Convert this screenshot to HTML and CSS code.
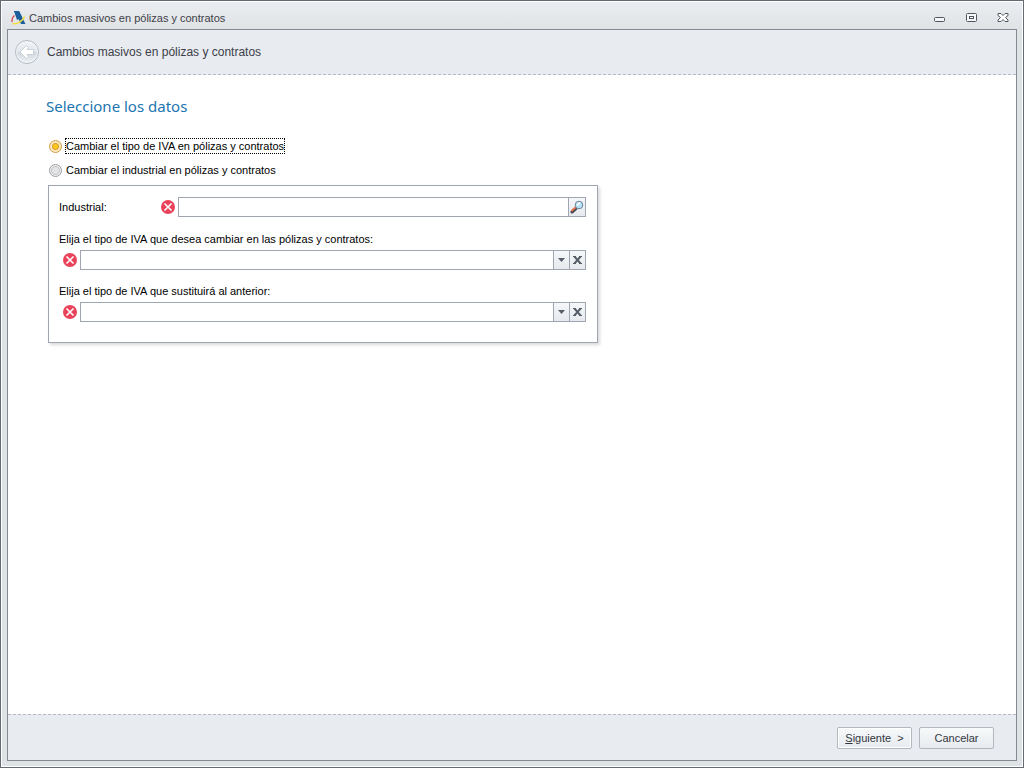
FILE: index.html
```html
<!DOCTYPE html>
<html lang="es">
<head>
    <meta charset="utf-8">
    <title>Cambios masivos en pólizas y contratos</title>
    <link rel="stylesheet" href="styles.css">
</head>
<body>
    <div class="window">
        <div class="titlebar">
            <svg class="logo" width="15" height="14" viewBox="0 0 15 14">
                <path d="M3 0h5l6.500 13H10L6 5z" fill="#1c5f9c"/>
                <path d="M3 0h5l3 6-5 3z" fill="#1c5f9c"/>
                <path d="M3.500 4.500C1.500 6 .8 8 1 11" fill="none" stroke="#cf4650" stroke-width="1.300"/>
                <path d="M1.500 12.500C6 13.500 12 10 13.500 5.500" fill="none" stroke="#f2e03c" stroke-width="1.500"/>
            </svg>
            <span class="caption">Cambios masivos en pólizas y contratos</span>
            <div class="window-buttons">
                <button type="button" aria-label="Minimizar">
                    <svg width="12" height="12" viewBox="0 0 12 12"><rect x="1.500" y="5.500" width="10" height="4" rx="1" fill="#f6f7f8" stroke="#50565e"/></svg>
                </button>
                <button type="button" aria-label="Maximizar">
                    <svg width="12" height="12" viewBox="0 0 12 12"><rect x="1.500" y="1.500" width="10" height="8" rx="1" fill="#f6f7f8" stroke="#50565e"/><rect x="4.500" y="4.500" width="4" height="2" fill="#fff" stroke="#50565e"/></svg>
                </button>
                <button type="button" aria-label="Cerrar">
                    <svg width="12" height="12" viewBox="0 0 12 12"><path d="M1 1.500h3l2 2 2-2h3v2L8.500 5.500 11 8v1.500H8l-2-2-2 2H1V8l2.500-2.500L1 3.500z" fill="#fff" stroke="#50565e"/></svg>
                </button>
            </div>
        </div>

        <form class="wizard">
            <header class="wizard-header">
                <button type="button" class="back" aria-label="Atrás" disabled>
                    <svg width="26" height="26" viewBox="0 0 26 26">
                        <defs>
                            <linearGradient id="disc" x1="0" y1="0" x2="0" y2="1">
                                <stop offset="0" stop-color="#f2f4f6"/>
                                <stop offset=".5" stop-color="#dfe4e9"/>
                                <stop offset=".52" stop-color="#cfd6dd"/>
                                <stop offset="1" stop-color="#edf0f3"/>
                            </linearGradient>
                        </defs>
                        <circle cx="13" cy="13" r="11.500" fill="#f5f7f9" stroke="#b4bac2"/>
                        <circle cx="13" cy="13" r="10" fill="url(#disc)"/>
                        <path d="M6 13l6.500-6.500 2 2L13 10.500h6.500v5H13l1.500 2-2 2z" fill="#fff" stroke="#c3cad2" stroke-width=".8" stroke-linejoin="round"/>
                    </svg>
                </button>
                <span>Cambios masivos en pólizas y contratos</span>
            </header>

            <main class="page">
                <h1>Seleccione los datos</h1>

                <div class="options">
                    <label class="option"><input type="radio" name="cambio" value="iva" checked><span>Cambiar el tipo de IVA en pólizas y contratos</span></label>
                    <label class="option"><input type="radio" name="cambio" value="industrial"><span>Cambiar el industrial en pólizas y contratos</span></label>
                </div>

                <div class="group">
                    <div class="row row-search">
                        <label class="row-label" for="industrial">Industrial:</label>
                        <svg class="error" width="14" height="14" viewBox="0 0 14 14"><circle cx="7" cy="7" r="7" fill="#e8435a"/><path d="M3.500 3.500l7 7M10.500 3.500l-7 7" stroke="#fff" stroke-width="1.600"/></svg>
                        <div class="field">
                            <input type="text" id="industrial">
                            <button type="button" aria-label="Buscar">
                                <svg width="14" height="14" viewBox="0 0 14 14">
                                    <path d="M2 12L6 8.500" stroke="#44464f" stroke-width="3" stroke-linecap="round"/>
                                    <path d="M1.500 11L6 7" stroke="#ea7550" stroke-width="1.800"/>
                                    <circle cx="9" cy="5" r="3.800" fill="#b4e4fa" stroke="#6d8196"/>
                                    <path d="M7 5.500l3-3" stroke="#fff" stroke-width="1.600"/>
                                </svg>
                            </button>
                        </div>
                    </div>

                    <label class="line-label" for="iva-actual">Elija el tipo de IVA que desea cambiar en las pólizas y contratos:</label>
                    <div class="row">
                        <svg class="error" width="14" height="14" viewBox="0 0 14 14"><circle cx="7" cy="7" r="7" fill="#e8435a"/><path d="M3.500 3.500l7 7M10.500 3.500l-7 7" stroke="#fff" stroke-width="1.600"/></svg>
                        <div class="field">
                            <select id="iva-actual"><option></option></select>
                            <button type="button" class="clear" aria-label="Borrar">
                                <svg width="9" height="8" viewBox="0 0 9 8"><path d="M0 .5h3M6 .5h3M0 7.500h3M6 7.500h3" stroke="#565e68"/><path d="M1.500 .5l6 7M7.500 .5l-6 7" stroke="#565e68" stroke-width="2"/></svg>
                            </button>
                        </div>
                    </div>

                    <label class="line-label" for="iva-nuevo">Elija el tipo de IVA que sustituirá al anterior:</label>
                    <div class="row">
                        <svg class="error" width="14" height="14" viewBox="0 0 14 14"><circle cx="7" cy="7" r="7" fill="#e8435a"/><path d="M3.500 3.500l7 7M10.500 3.500l-7 7" stroke="#fff" stroke-width="1.600"/></svg>
                        <div class="field">
                            <select id="iva-nuevo"><option></option></select>
                            <button type="button" class="clear" aria-label="Borrar">
                                <svg width="9" height="8" viewBox="0 0 9 8"><path d="M0 .5h3M6 .5h3M0 7.500h3M6 7.500h3" stroke="#565e68"/><path d="M1.500 .5l6 7M7.500 .5l-6 7" stroke="#565e68" stroke-width="2"/></svg>
                            </button>
                        </div>
                    </div>
                </div>
            </main>

            <footer class="wizard-footer">
                <button type="button" class="btn btn-default"><u>S</u>iguiente &nbsp;&gt;</button>
                <button type="button" class="btn">Cancelar</button>
            </footer>
        </form>
    </div>
</body>
</html>
```

FILE: styles.css
```css
* { box-sizing: border-box; }
body { margin: 0; font: 11px/16px Tahoma, "Liberation Sans", sans-serif; color: #000; }
button, input, select { font: inherit; margin: 0; padding: 0; }
svg { display: block; flex: none; }

.window {
    display: flex;
    flex-direction: column;
    min-height: 100vh;
    padding: 1px 6px 6px;
    border: 1px solid #656b75;
    box-shadow: inset 0 0 0 1px #fff;
    background: linear-gradient(#ebedf0, #e0e3e5 28px);
}

/* title bar */
.titlebar { display: flex; align-items: center; height: 27px; padding: 4px 4px 0 4px; }
.caption { flex: 1; margin-left: 3px; color: #3c4048; }
.window-buttons { display: flex; gap: 20px; padding-right: 4px; }
.window-buttons button { border: 0; background: none; }

/* wizard */
.wizard { display: flex; flex-direction: column; flex: 1; border: 1px solid #838a91; background: #fff; }
.wizard-header {
    display: flex;
    align-items: center;
    gap: 7px;
    height: 45px;
    padding-left: 6px;
    border-bottom: 1px dashed #b4bac8;
    background: #e8ebf0;
    font-size: 12px;
    color: #3c4048;
}
.back { border: 0; background: none; }
.page { flex: 1; padding: 19px 38px; }
h1 { margin: 0; font: 15px/24px "Noto Sans", sans-serif; color: #1c75b0; }

.options { display: grid; justify-items: start; gap: 8px; margin: 20px 0 7px 3px; }
.option { display: flex; align-items: center; gap: 3px; }
.option span { border: 1px dotted transparent; line-height: 14px; }
.option input {
    appearance: none;
    width: 13px;
    height: 13px;
    border: 1px solid #9a9da1;
    border-radius: 50%;
    background: radial-gradient(circle, #e4e4e4 3px, #c4c6c8 4px, #f2f2f2 5px);
}
.option input:checked { border-color: #d29a45; background: radial-gradient(circle, #ffc91c 2px, #d99a2e 3px, #ffeac0 4px); }
.option input:checked + span { border-color: #000; }

.group {
    width: 550px;
    max-width: 100%;
    margin-left: 2px;
    padding: 11px 11px 20px 10px;
    border: 1px solid #a0a5b2;
    background: #fff;
    box-shadow: 2px 2px 3px rgba(0, 0, 0, .15);
}
.row { display: flex; align-items: center; }
.row-search { margin-bottom: 14px; }
.row-label { width: 98px; }
.line-label { display: block; margin: 13px 0 3px; }
.error { margin: 0 3px 0 4px; }

.field { display: flex; flex: 1; height: 20px; border: 1px solid #a0a5b2; }
.field input, .field select { flex: 1; min-width: 0; border: 0; border-radius: 0; background: #fff; }
.field select {
    appearance: none;
    background:
        url("data:image/svg+xml,%3Csvg xmlns='http://www.w3.org/2000/svg' width='7' height='4'%3E%3Cpath d='M0 0h7L3.500 4z' fill='%23565e68'/%3E%3C/svg%3E") no-repeat right 4px center,
        linear-gradient(#f5f7f9, #e6eaee) no-repeat right / 15px 100%,
        linear-gradient(#a0a5b2, #a0a5b2) no-repeat right / 16px 100%,
        #fff;
}
.field button {
    display: flex;
    align-items: center;
    justify-content: center;
    width: 17px;
    border: 0;
    border-left: 1px solid #a0a5b2;
    background: linear-gradient(#f5f7f9, #e6eaee);
}
.field .clear { width: 16px; }

/* bottom buttons */
.wizard-footer {
    display: flex;
    align-items: center;
    justify-content: flex-end;
    gap: 7px;
    height: 46px;
    padding-right: 22px;
    border-top: 1px dashed #b4bac8;
    background: #e8ebf0;
}
.btn {
    width: 75px;
    height: 22px;
    border: 1px solid #b3b7be;
    border-radius: 2px;
    background: linear-gradient(#f7f9fa, #e7ebef);
    color: #32363e;
}
.btn-default { box-shadow: inset 0 0 0 1px #fff; }
```
